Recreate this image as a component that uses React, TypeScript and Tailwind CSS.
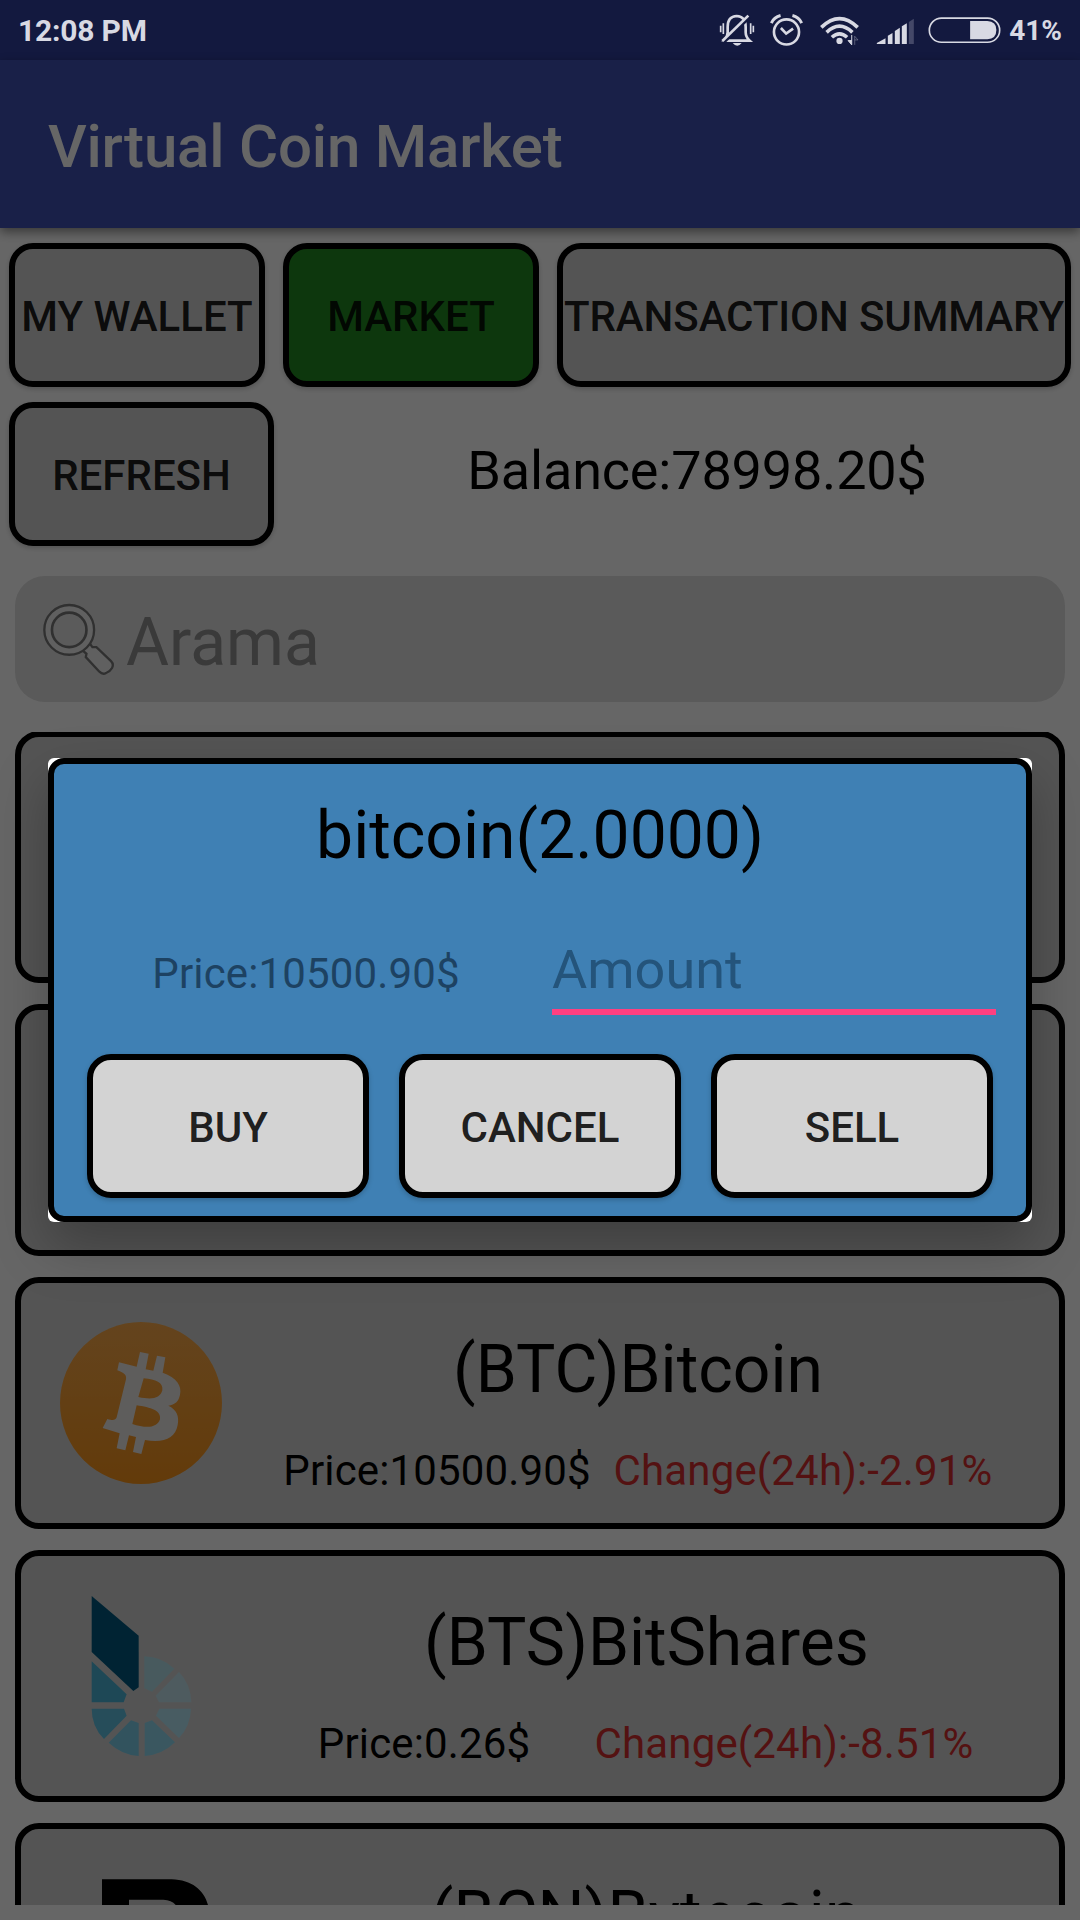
import React from 'react';
import clsx from 'clsx';

interface Coin {
  id: string;
  title?: string;
  price?: string;
  change?: string;
  logo?: React.ReactNode;
  titleClass?: string;
  priceClass?: string;
  changeClass?: string;
}

function BitcoinLogo() {
  return (
    <svg viewBox="180 186 486 486" className="size-[162px]">
      <defs>
        <linearGradient id="btc" x1="0" y1="0" x2="0" y2="1">
          <stop offset="0" stopColor="#f9aa4b" />
          <stop offset="1" stopColor="#f7931a" />
        </linearGradient>
      </defs>
      <circle cx="423" cy="429" r="243" fill="url(#btc)" />
      <path
        fillRule="evenodd"
        fill="#ebe8e6"
        d="M357 307 L410 320 L420 276 L446 281 L437 328 L460 332 L471 287 L496 292 L488 338 C530 352 546 378 540 404 C536 424 525 434 505 437 C530 449 538 468 533 495 C526 534 492 550 435 540 L424 582 L399 576 L408 531 L387 526 L376 571 L350 565 L359 520 L308 504 L322 477 C338 482 346 482 350 472 L378 358 C380 345 374 339 352 331 Z M431 355 L415 411 C455 420 480 416 487 391 C490 367 468 359 431 355 Z M410 436 L397 492 C432 503 470 508 480 478 C485 452 452 442 410 436 Z"
      />
    </svg>
  );
}

function BitSharesLogo() {
  return (
    <svg viewBox="180 165 486 486" className="size-[162px]">
      <path d="M275 168 L416 287 V442 L400 453 L275 336 Z" fill="#00597f" />
      <path d="M275 364 L380 463 L371 487 H275 Z" fill="#4bb4d7" />
      <path d="M275 506 H372 L380 527 L312 597 Q275 560 275 506 Z" fill="#5fc0e2" />
      <path d="M326 608 L393 541 L416 549 V648 Q366 645 326 608 Z" fill="#7dcfec" />
      <path d="M434 549 L456 541 L525 607 Q486 645 434 648 Z" fill="#91daf1" />
      <path d="M468 527 L478 506 H573 Q571 558 537 594 Z" fill="#b4e6f5" />
      <path d="M467 467 L537 396 Q572 432 574 487 H477 Z" fill="#c3e4ee" />
      <path d="M433 349 Q485 350 523 386 L456 455 L433 445 Z" fill="#b4e1eb" />
    </svg>
  );
}

function BytecoinLogo() {
  return (
    <svg viewBox="180 984 486 486" className="size-[162px]">
      <path
        fillRule="evenodd"
        d="M306 1018 H515 C575 1020 612 1050 624 1095 Q635 1180 590 1215 Q650 1250 640 1330 Q620 1430 515 1436 H306 Z M387 1079 V1180 H500 Q540 1170 538 1120 Q530 1080 490 1079 Z M387 1250 V1370 H510 Q560 1360 560 1310 Q555 1255 500 1250 Z"
        fill="#000"
      />
    </svg>
  );
}

const coins: Coin[] = [
  { id: 'row-1' },
  { id: 'row-2' },
  {
    id: 'btc',
    title: '(BTC)Bitcoin',
    price: 'Price:10500.90$',
    change: 'Change(24h):-2.91%',
    logo: <BitcoinLogo />,
    titleClass: 'w-[796px]',
    priceClass: 'ml-[36px] w-[322px]',
    changeClass: 'w-[410px]'
  },
  {
    id: 'bts',
    title: '(BTS)BitShares',
    price: 'Price:0.26$',
    change: 'Change(24h):-8.51%',
    logo: <BitSharesLogo />,
    titleClass: 'w-[813px]',
    priceClass: 'ml-[23px] w-[322px]',
    changeClass: 'w-[398px]'
  },
  {
    id: 'bcn',
    title: '(BCN)Bytecoin',
    logo: <BytecoinLogo />,
    titleClass: 'w-[812px]'
  }
];

function OutlinedButton({ label, className }: { label: string; className?: string }) {
  return (
    <button
      className={clsx(
        'flex h-[144px] shrink-0 items-center justify-center rounded-[24px] border-[6px] border-black pt-[3px] text-[42px] leading-[48px] font-medium whitespace-nowrap text-black/87 shadow-[0_2px_5px_rgba(0,0,0,0.2)]',
        className
      )}
    >
      {label}
    </button>
  );
}

function StatusBar() {
  return (
    <div className="flex h-[60px] items-center bg-[#13193f] pr-[18px] pl-[18px] text-[#d8d9e3]">
      <span className="flex-1 pt-[2px] text-[30px] leading-[36px] font-bold tracking-[-0.2px]">12:08 PM</span>

      <svg viewBox="54 36 108 102" className="h-[34px] w-[36px]" fill="none" stroke="currentColor">
        <path d="M70 119 H146 Q134 108 134 94 V78 Q134 46 107 45 Q80 46 80 78 V94 Q80 108 70 119 Z" strokeWidth="8" />
        <path d="M67 125 L145 49" stroke="#13193f" strokeWidth="10" />
        <path d="M64 120 L142 44" strokeWidth="8" />
        <path d="M59 74 V94 M67 67 V99 M149 67 V99 M157 74 V94" strokeWidth="5" />
        <path d="M95 126 H122 Q109 143 95 126 Z" fill="currentColor" stroke="none" />
      </svg>
      <svg viewBox="208 36 100 102" className="ml-[15px] h-[34px] w-[33px]" fill="none" stroke="currentColor">
        <circle cx="258" cy="93" r="38" strokeWidth="8" />
        <path d="M241 81 L257 98 L278 83" strokeWidth="8" />
        <path d="M212 66 Q220 48 240 43 M304 66 Q296 48 276 43" strokeWidth="9" />
      </svg>
      <svg viewBox="358 36 118 102" className="ml-[17px] h-[34px] w-[39px]" fill="none" stroke="currentColor">
        <path d="M362 79 Q417 26 472 79" strokeWidth="11" />
        <path d="M378 94 Q417 57 456 94" strokeWidth="11" />
        <path d="M394 109 Q417 88 440 109" strokeWidth="11" />
        <circle cx="417" cy="120" r="9.500" fill="currentColor" stroke="none" />
        <path d="M454 102 V132 L443 119 H454" fill="currentColor" strokeWidth="3" />
        <path d="M463 132 V106 L473 117 H463" strokeWidth="3" opacity="0.35" />
      </svg>
      <svg viewBox="526 36 116 102" className="ml-[17px] h-[34px] w-[39px]" fill="currentColor">
        <path d="M528 129 V126 L554 112 V129 Z" />
        <path d="M561 129 V104 L575 96 V129 Z" />
        <path d="M582 129 V90 L597 80 V129 Z" />
        <path d="M603 129 V76 L618 67 V129 Z" />
        <path d="M624 129 V63 L639 53 V129 Z" opacity="0.25" />
      </svg>
      <svg viewBox="682 48 220 84" className="ml-[13px] h-[28px] w-[73px]">
        <rect x="686" y="54" width="212" height="73" rx="36.500" fill="none" stroke="currentColor" strokeWidth="5" />
        <path d="M809 63 H861 Q888 64 888 90 Q888 117 861 118 H809 Z" fill="currentColor" />
      </svg>
      <span className="ml-[8px] pt-[2px] text-[28px] leading-[36px] font-bold">41%</span>
    </div>
  );
}

function SearchBox() {
  return (
    <div className="mx-[15px] mt-[30px] flex h-[126px] items-center rounded-[30px] bg-[#e1e1e1] pl-[27px]">
      <svg viewBox="126 129 218 220" className="h-[73px] w-[73px]" fill="none" stroke="#787878">
        <path
          d="M247 272 L259 282 L257 292 L298 336 Q308 346 318 340 Q330 336 336 325 Q342 313 333 304 L289 262 H277 L268 250 Z"
          fill="#f0f0f0"
          strokeWidth="7"
        />
        <circle cx="207" cy="210" r="75" fill="#f0f0f0" strokeWidth="7" />
        <circle cx="207" cy="210" r="52" fill="#e3e3e3" strokeWidth="8" />
      </svg>
      <span className="ml-[11px] pt-[8px] text-[66px] leading-[78px] text-[#919191]">Arama</span>
    </div>
  );
}

function CoinCard({ coin }: { coin: Coin }) {
  return (
    <div className="flex h-[252px] shrink-0 rounded-[24px] border-[6px] border-black bg-[#d3d3d3]">
      <div className="mt-[39px] ml-[39px] size-[162px] shrink-0">{coin.logo}</div>
      <div className="ml-[18px] flex-1 pt-[48px] text-black">
        <div className={clsx('h-[78px] text-center text-[66px] leading-[78px]', coin.titleClass)}>{coin.title}</div>
        <div className="mt-[37px] flex h-[50px] text-center text-[42px] leading-[50px] tracking-[0.15px] whitespace-nowrap">
          <span className={coin.priceClass}>{coin.price}</span>
          <span className={clsx('text-[#d32f2f]', coin.changeClass)}>{coin.change}</span>
        </div>
      </div>
    </div>
  );
}

function TradeDialog() {
  return (
    <div className="h-[464px] w-[984px] rounded-[6px] bg-white shadow-[0_24px_54px_rgba(0,0,0,0.26)]">
      <div className="h-full rounded-[16px] border-[6px] border-black bg-[#3f80b4] pt-[33px]">
        <div className="text-center text-[66px] leading-[78px] text-black">bitcoin(2.0000)</div>
        <div className="mt-[63px] flex items-baseline">
          <span className="w-[498px] pl-[6px] text-center text-[42px] leading-[50px] tracking-[0.15px] text-[#1d4262]">
            Price:10500.90$
          </span>
          <span className="h-[77px] w-[444px] border-b-[6px] border-[#ff4081] text-[54px] leading-[64px] text-[#24547b]">
            Amount
          </span>
        </div>
        <div className="mt-[39px] flex gap-[30px] pl-[33px]">
          <OutlinedButton label="BUY" className="w-[282px] bg-[#d3d3d3]" />
          <OutlinedButton label="CANCEL" className="w-[282px] bg-[#d3d3d3]" />
          <OutlinedButton label="SELL" className="w-[282px] bg-[#d3d3d3]" />
        </div>
      </div>
    </div>
  );
}

export default function App() {
  return (
    <div className="relative flex h-[1920px] w-[1080px] flex-col overflow-hidden bg-white font-[Roboto,sans-serif]">
      <StatusBar />

      <div className="relative flex min-h-0 flex-1 flex-col">
        <header className="flex h-[168px] shrink-0 items-center bg-[#3f51b5] pt-[5px] pl-[48px] shadow-[0_4px_10px_rgba(0,0,0,0.45)]">
          <h1 className="text-[60px] leading-[72px] font-medium tracking-[-0.2px] text-white">Virtual Coin Market</h1>
        </header>

        <nav className="mt-[15px] flex gap-[18px] pl-[9px]">
          <OutlinedButton label="MY WALLET" className="w-[256px] bg-[#d3d3d3]" />
          <OutlinedButton label="MARKET" className="w-[256px] bg-[#228b22]" />
          <OutlinedButton label="TRANSACTION SUMMARY" className="w-[514px] bg-[#d3d3d3] tracking-[-0.1px]" />
        </nav>

        <div className="mt-[15px] flex items-center pl-[9px]">
          <OutlinedButton label="REFRESH" className="w-[265px] bg-[#d3d3d3]" />
          <span className="ml-[40px] flex-1 pb-[7px] text-center text-[54px] leading-[64px] tracking-[-0.18px] text-black">
            Balance:78998.20$
          </span>
        </div>

        <SearchBox />

        <div className="mx-[15px] mt-[30px] flex h-[1173px] flex-col gap-[21px] overflow-hidden">
          <div className="-mb-[22px]" />
          {coins.map(coin => (
            <CoinCard key={coin.id} coin={coin} />
          ))}
        </div>

        {/* Scrim with the trade dialog on top */}
        <div className="absolute inset-0 flex justify-center bg-black/60 pt-[698px]">
          <TradeDialog />
        </div>
      </div>
    </div>
  );
}
